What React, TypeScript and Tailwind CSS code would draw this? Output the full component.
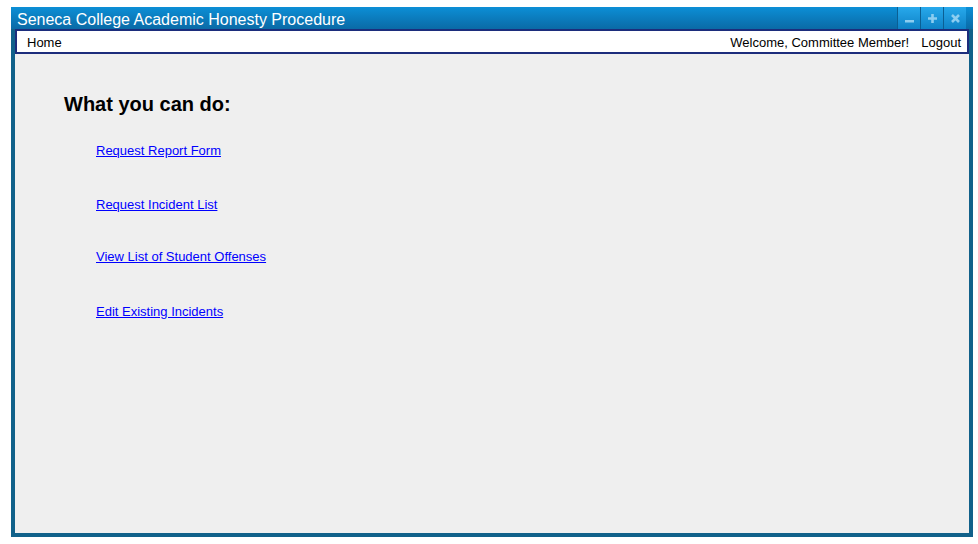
const links = [
  { label: "Request Report Form", mt: "mt-[28px]" },
  { label: "Request Incident List", mt: "mt-[39px]" },
  { label: "View List of Student Offenses", mt: "mt-[37px]" },
  { label: "Edit Existing Incidents", mt: "mt-[40px]" },
];

function WinButton({ kind }: { kind: "min" | "max" | "close" }) {
  return (
    <div className="flex h-full w-[23px] items-center justify-center border-l border-[#0b5f93] bg-gradient-to-b from-[#27a9ec] to-[#0e82c6]">
      <svg width="11" height="11" viewBox="0 0 11 11">
        {kind === "min" && <rect x="1" y="7" width="9" height="2.5" fill="#8ccdf0" />}
        {kind === "max" && (
          <path d="M4.2 1h2.6v3.2H10v2.6H6.8V10H4.2V6.8H1V4.2h3.2z" fill="#8ccdf0" />
        )}
        {kind === "close" && (
          <path d="M2 2l7 7M9 2l-7 7" stroke="#8ccdf0" strokeWidth="2.6" />
        )}
      </svg>
    </div>
  );
}

export default function App() {
  return (
    <div
      className="h-[544px] w-[978px] bg-white pl-[11px] pt-[7px]"
      style={{ fontFamily: '"Liberation Sans", Arial, sans-serif' }}
    >
      <div className="flex h-[530px] w-[962px] flex-col">
        <div className="flex h-[22px] shrink-0 items-center bg-gradient-to-b from-[#0c8fd6] to-[#0a6aa6]">
          <span className="pl-[6px] pt-[3px] text-[16px] leading-none text-white">
            Seneca College Academic Honesty Procedure
          </span>
          <div className="ml-auto mr-[7px] flex h-full">
            <WinButton kind="min" />
            <WinButton kind="max" />
            <WinButton kind="close" />
          </div>
        </div>
        <div className="flex flex-1 flex-col border-x-4 border-b-4 border-[#11618a] bg-[#efefef]">
          <div className="flex h-[25px] shrink-0 items-center border-2 border-[#1c2d7c] bg-white pl-[10px] pr-[6px] pt-[2px] text-[13px] text-black">
            <span>Home</span>
            <span className="ml-auto">Welcome, Committee Member!</span>
            <span className="ml-[12px]">Logout</span>
          </div>
          <div className="pl-[49px] pt-[39px]">
            <h1 className="text-[20px] font-bold leading-[22px] text-black">What you can do:</h1>
            <div className="flex flex-col items-start pl-[32px]">
              {links.map((l) => (
                <a key={l.label} href="#" className={`${l.mt} text-[13px] leading-[15px] text-[#0000ff] underline`}>
                  {l.label}
                </a>
              ))}
            </div>
          </div>
        </div>
      </div>
    </div>
  );
}
